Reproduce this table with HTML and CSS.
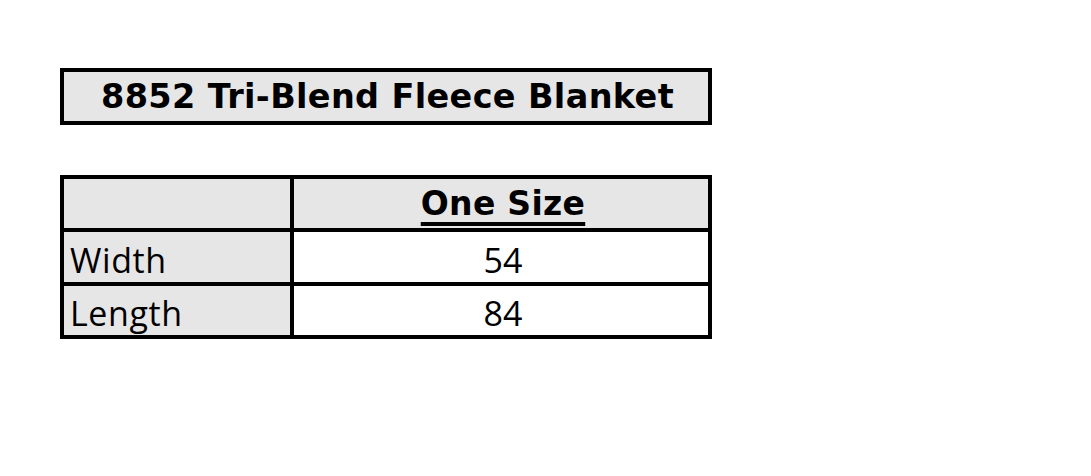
FILE: index.html
```html
<!DOCTYPE html>
<html>
<head>
<meta charset="utf-8">
<link rel="stylesheet" href="styles.css">
</head>
<body>
<div class="sheet">
  <div class="title">8852 Tri-Blend Fleece Blanket</div>
  <div class="size-table">
    <div class="cell label"></div>
    <div class="cell head"><span class="u">One Size</span></div>
    <div class="cell label">Width</div>
    <div class="cell value">54</div>
    <div class="cell label">Length</div>
    <div class="cell value">84</div>
  </div>
</div>
</body>
</html>
```
FILE: styles.css
```css
html, body {
  margin: 0;
  padding: 0;
  background: #ffffff;
}
.sheet {
  padding: 68px 0 0 60px;
  display: flex;
  flex-direction: column;
  gap: 50px;
  width: 652px;
}
.title {
  box-sizing: border-box;
  width: 652px;
  height: 57px;
  border: 4px solid #000;
  background: #e6e6e6;
  font-family: "DejaVu Sans", Verdana, sans-serif;
  font-weight: bold;
  font-size: 33.5px;
  letter-spacing: 0.35px;
  line-height: 49px;
  text-align: center;
  color: #000;
  padding-left: 3px;
}
.size-table {
  display: grid;
  grid-template-columns: 226px 414px;
  grid-template-rows: 49px 50px 49px;
  gap: 4px;
  padding: 4px;
  background: #000;
  width: 644px;
}
.cell {
  background: #fff;
  color: #000;
  display: flex;
  align-items: center;
}
.label {
  background: #e6e6e6;
  font-family: "Open Sans", "Noto Sans", sans-serif;
  font-size: 34px;
  letter-spacing: 0.6px;
  padding-left: 6px;
  padding-top: 5px;
}
.head {
  background: #e6e6e6;
  justify-content: center;
  font-family: "DejaVu Sans", Verdana, sans-serif;
  font-weight: bold;
  font-size: 33px;
  letter-spacing: 0.3px;
  padding-left: 4px;
}
.u {
  text-decoration: underline;
  text-decoration-thickness: 4px;
  text-underline-offset: 7px;
}
.value {
  justify-content: center;
  font-family: "Open Sans", "Noto Sans", sans-serif;
  font-size: 34px;
  padding-left: 4px;
  padding-top: 5px;
}
```
